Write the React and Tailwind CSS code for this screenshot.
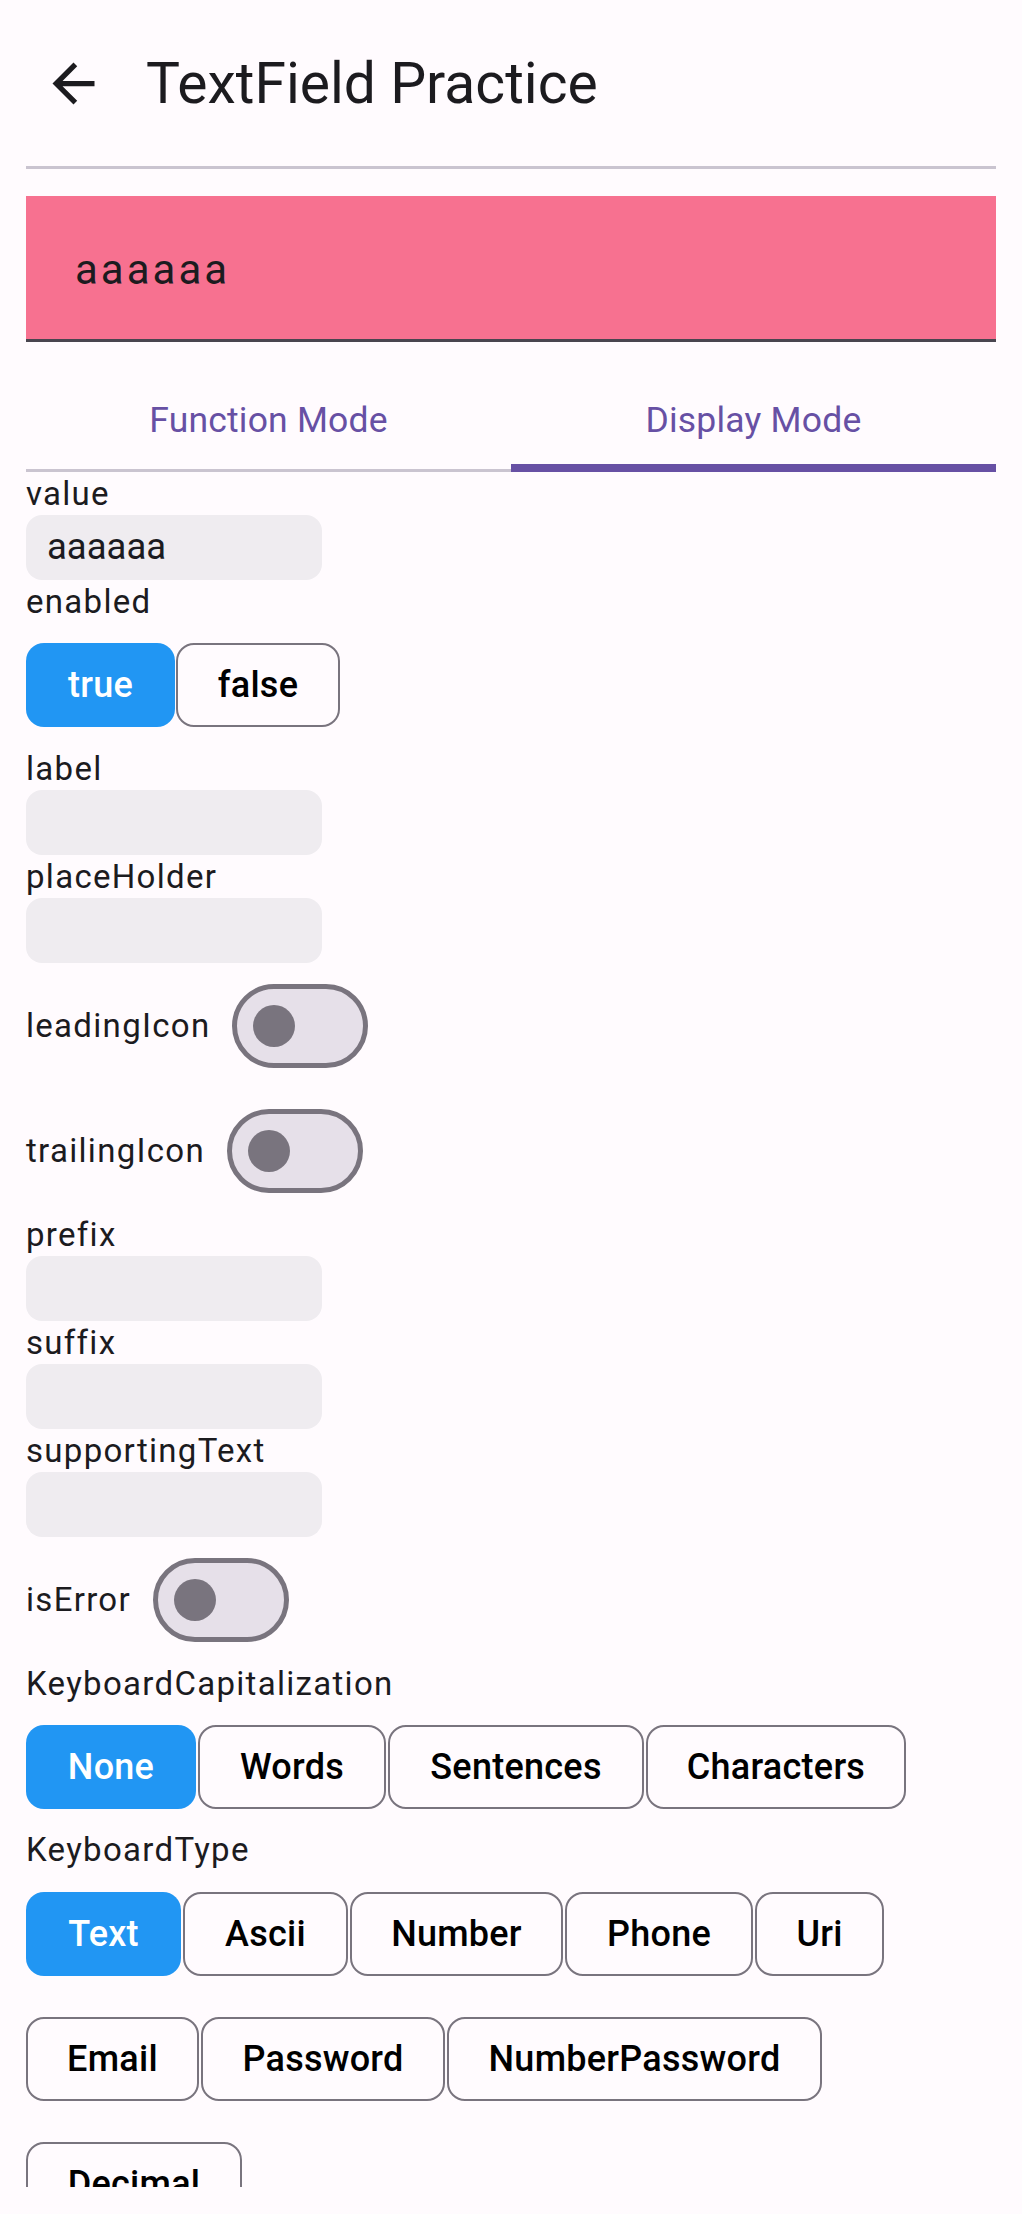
import React from "react";

function Label({ children }) {
  return (
    <div className="h-[43px] text-[33px] leading-[43px] tracking-[1.3px] text-[#1c1b1f] whitespace-nowrap">
      {children}
    </div>
  );
}

function Field({ value }) {
  return (
    <div className="w-[296px] h-[65px] rounded-[16px] bg-[#efecf0] flex items-center pl-[21px] text-[36.5px] leading-none text-[#1c1b1f]">
      {value}
    </div>
  );
}

function Btn({ text, w, selected }) {
  return selected ? (
    <div
      className={`${w} h-[84px] shrink-0 rounded-[18px] bg-[#2196f3] text-white flex items-center justify-center text-[36px] font-medium tracking-[0.26px] leading-none`}
    >
      {text}
    </div>
  ) : (
    <div
      className={`${w} h-[84px] shrink-0 rounded-[18px] border-[2.6px] border-[#79747e] text-black flex items-center justify-center text-[36px] font-medium tracking-[0.26px] leading-none`}
    >
      {text}
    </div>
  );
}

function SwitchRow({ label }) {
  return (
    <div className="h-[125px] flex items-center">
      <div className="text-[33px] leading-[43px] tracking-[1.3px] text-[#1c1b1f]">{label}</div>
      <div className="ml-[22px] w-[136px] h-[84px] rounded-full border-[5px] border-[#79747e] bg-[#e6e0e9] flex items-center">
        <div className="ml-[16px] w-[42px] h-[42px] rounded-full bg-[#79747e]" />
      </div>
    </div>
  );
}

export default function App() {
  return (
    <div className="w-[1022px] h-[2214px] bg-[#fffbfe] font-['Roboto','Liberation_Sans',sans-serif] overflow-hidden">
      <div className="h-[2187px] overflow-hidden flex flex-col">
        {/* Top app bar */}
        <div className="h-[166px] shrink-0 flex items-center">
          <svg
            className="ml-[42px] w-[63px] h-[63px] shrink-0"
            viewBox="0 0 24 24"
            fill="#1c1b1f"
          >
            <path d="M20 11H7.83l5.59-5.59L12 4l-8 8 8 8 1.41-1.41L7.83 13H20v-2z" />
          </svg>
          <div className="ml-[41px] text-[57px] leading-none text-[#1c1b1f] whitespace-nowrap">
            TextField Practice
          </div>
        </div>

        <div className="px-[26px] flex flex-col">
          <div className="h-[3px] bg-[#cac4d0]" />

          {/* Pink text field */}
          <div className="mt-[27px] h-[146px] bg-[#f77190] border-b-[3px] border-[#49454f] flex items-center pl-[49px] pt-[4px]">
            <span className="text-[42px] leading-none tracking-[3px] text-[#1c1b1f]">aaaaaa</span>
          </div>

          {/* Tabs */}
          <div className="h-[130px] grid grid-cols-2">
            <div className="border-b-[3px] border-[#cac4d0] flex items-end justify-center pb-[31px]">
              <span className="text-[35.5px] leading-none text-[#6750a4] tracking-[0.2px]">Function Mode</span>
            </div>
            <div className="border-b-[8px] border-[#6750a4] flex items-end justify-center pb-[26px]">
              <span className="text-[35.5px] leading-none text-[#6750a4] tracking-[0.2px]">Display Mode</span>
            </div>
          </div>

          <Label>value</Label>
          <Field value="aaaaaa" />
          <Label>enabled</Label>
          <div className="h-[124px] flex items-center gap-[1px]">
            <Btn text="true" w="w-[149px]" selected />
            <Btn text="false" w="w-[164px]" />
          </div>
          <Label>label</Label>
          <Field value="" />
          <Label>placeHolder</Label>
          <Field value="" />
          <SwitchRow label="leadingIcon" />
          <SwitchRow label="trailingIcon" />
          <Label>prefix</Label>
          <Field value="" />
          <Label>suffix</Label>
          <Field value="" />
          <Label>supportingText</Label>
          <Field value="" />
          <SwitchRow label="isError" />

          <Label>KeyboardCapitalization</Label>
          <div className="h-[123px] flex items-center gap-[2px]">
            <Btn text="None" w="w-[170px]" selected />
            <Btn text="Words" w="w-[188px]" />
            <Btn text="Sentences" w="w-[256px]" />
            <Btn text="Characters" w="w-[260px]" />
          </div>

          <Label>KeyboardType</Label>
          <div className="h-[125px] flex items-center gap-[2px]">
            <Btn text="Text" w="w-[155px]" selected />
            <Btn text="Ascii" w="w-[165px]" />
            <Btn text="Number" w="w-[213px]" />
            <Btn text="Phone" w="w-[188px]" />
            <Btn text="Uri" w="w-[129px]" />
          </div>
          <div className="h-[125px] flex items-center gap-[2px]">
            <Btn text="Email" w="w-[173px]" />
            <Btn text="Password" w="w-[244px]" />
            <Btn text="NumberPassword" w="w-[375px]" />
          </div>
          <div className="h-[126px] flex items-center gap-[2px]">
            <Btn text="Decimal" w="w-[216px]" />
          </div>
        </div>
      </div>
    </div>
  );
}
